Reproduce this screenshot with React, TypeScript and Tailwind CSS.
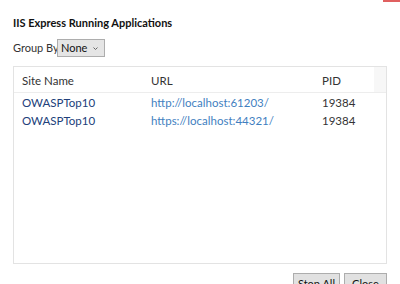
import React from "react";

const rows = [
  { site: "OWASPTop10", url: "http://localhost:61203/", pid: "19384" },
  { site: "OWASPTop10", url: "https://localhost:44321/", pid: "19384" },
];

export default function App() {
  return (
    <div
      className="relative w-[400px] h-[284px] bg-white overflow-hidden text-[11px] text-[#222]"
      style={{ fontFamily: "Lato, 'Noto Sans', sans-serif" }}
    >
      <div className="absolute right-0 top-0 w-[17px] h-[2px] bg-[#e06060]" />
      <div className="pl-[13px] pr-[13px] pt-[15px]">
        <h1 className="font-bold text-[11px] leading-[16px] text-[#111]">IIS Express Running Applications</h1>
        <div className="flex items-center mt-[8px] h-[18px]">
          <span className="text-[#333] text-[11px] w-[44px] whitespace-nowrap">Group By</span>
          <div className="flex items-center justify-between h-[18px] w-[48px] border border-[#adadad] bg-[#e5e5e5] pl-[3px] pr-[6px] text-[#111] text-[11px]">
            <span>None</span>
            <svg className="shrink-0" width="5" height="3" viewBox="0 0 5 3">
              <path d="M0.5 0.5 L2.5 2.5 L4.5 0.5" fill="none" stroke="#666" strokeWidth="1" />
            </svg>
          </div>
        </div>
        <div className="mt-[9px] h-[198px] w-[374px] border border-[#e3e3e3] flex flex-col">
          <div className="flex h-[26px] border-b border-[#ededed]">
            <div className="flex flex-1 items-center pt-[2px] text-[11.5px]">
              <span className="w-[137px] pl-[8px] text-[#333]">Site Name</span>
              <span className="w-[171px] text-[#333]">URL</span>
              <span className="text-[#333]">PID</span>
            </div>
            <div className="w-[12px] bg-[#f7f7f7]" />
          </div>
          <div className="pt-[1px] text-[11.5px]">
            {rows.map((r, i) => (
              <div key={i} className="flex items-center h-[18px]">
                <span className="w-[137px] pl-[8px] text-[#21407a]">{r.site}</span>
                <span className="w-[171px] text-[#3f7fbf]">{r.url}</span>
                <span className="text-[#333]">{r.pid}</span>
              </div>
            ))}
          </div>
        </div>
        <div className="flex justify-end gap-[4px] mt-[9px]">
          <button className="h-[22px] w-[47px] border border-[#adadad] bg-[#e1e1e1] text-[#111] text-[11px]">Stop All</button>
          <button className="h-[22px] w-[43px] border border-[#adadad] bg-[#e1e1e1] text-[#111] text-[11px]">Close</button>
        </div>
      </div>
    </div>
  );
}
